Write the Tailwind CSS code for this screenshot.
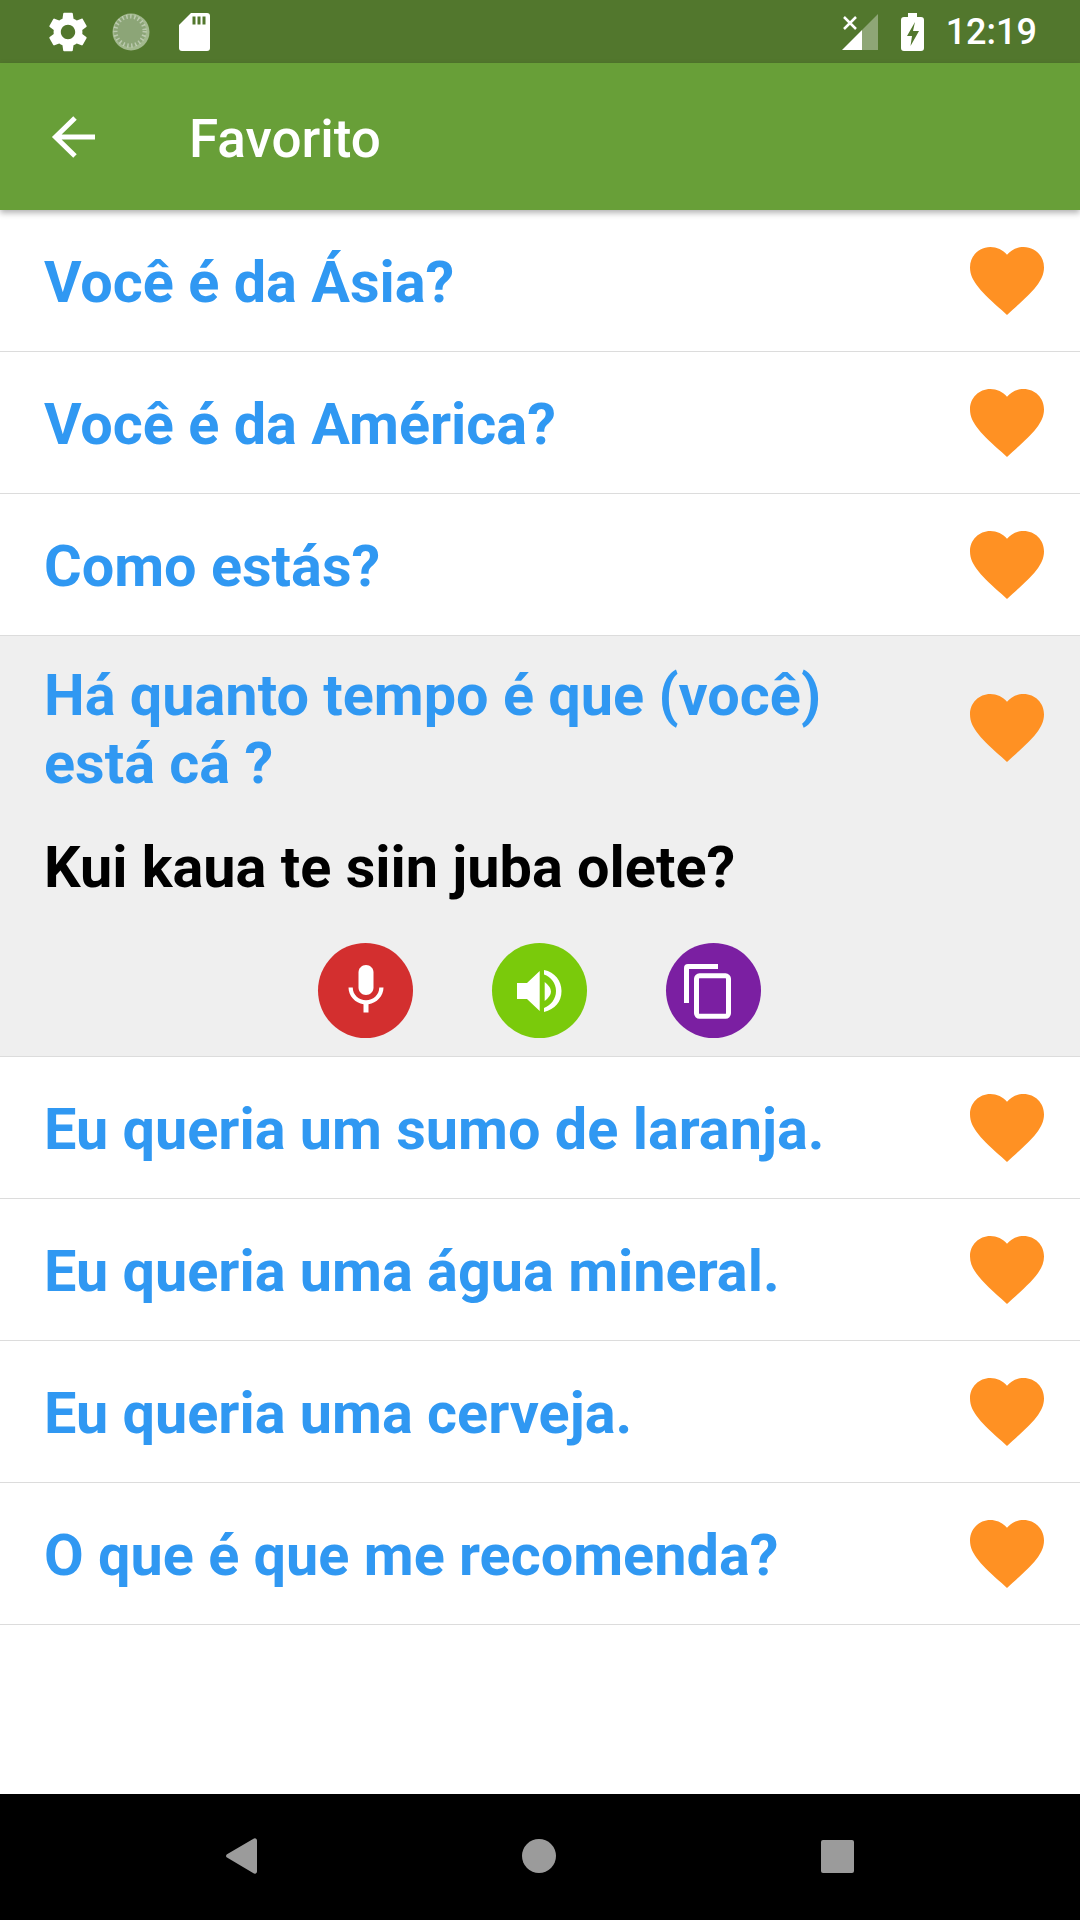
<!DOCTYPE html>
<html>
<head>
<meta charset="utf-8">
<script src="https://cdn.jsdelivr.net/npm/@tailwindcss/browser@4"></script>
</head>
<body class="m-0 bg-white font-['Roboto',sans-serif]">
<div class="w-[1080px] h-[1920px] flex flex-col overflow-hidden">
  <div class="h-[63px] bg-[#52772d] flex items-center justify-between pl-[44px] pr-[43px] shrink-0 text-white">
    <div class="flex items-center">
      <svg class="w-[48px] h-[48px]" viewBox="0 0 24 24" fill="#fff"><path d="M19.14 12.94c.04-.3.06-.61.06-.94 0-.32-.02-.64-.07-.94l2.03-1.58c.18-.14.23-.41.12-.61l-1.92-3.32c-.12-.22-.37-.29-.59-.22l-2.39.96c-.5-.38-1.03-.7-1.62-.94l-.36-2.54c-.04-.24-.24-.41-.48-.41h-3.84c-.24 0-.43.17-.47.41l-.36 2.54c-.59.24-1.13.57-1.62.94l-2.39-.96c-.22-.08-.47 0-.59.22L2.74 8.87c-.12.21-.08.47.12.61l2.03 1.58c-.05.3-.09.63-.09.94s.02.64.07.94l-2.03 1.58c-.18.14-.23.41-.12.61l1.92 3.32c.12.22.37.29.59.22l2.39-.96c.5.38 1.03.7 1.62.94l.36 2.54c.05.24.24.41.48.41h3.84c.24 0 .44-.17.47-.41l.36-2.54c.59-.24 1.13-.56 1.62-.94l2.39.96c.22.08.47 0 .59-.22l1.92-3.32c.12-.22.07-.47-.12-.61l-2.01-1.58zM12 15.6c-1.98 0-3.6-1.62-3.6-3.6s1.62-3.6 3.6-3.6 3.6 1.62 3.6 3.6-1.62 3.6-3.6 3.6z"/></svg>
      <svg class="w-[38px] h-[38px] ml-[20px]" viewBox="0 0 38 38"><circle cx="19" cy="19" r="18.500" fill="#a3b98f"/><circle cx="18" cy="18" r="16" fill="#8ca577"/><circle cx="18" cy="18" r="14.500" fill="none" stroke="#fff" stroke-opacity=".4" stroke-width="4" stroke-dasharray="1.500 2.500"/><path d="M35 8a18.500 18.500 0 0 1-26 27a17 17 0 0 0 26-27z" fill="#fff" fill-opacity=".9"/></svg>
      <svg class="w-[31px] h-[38px] ml-[29px]" viewBox="0 0 31 38" fill="#fff"><path d="M12 0h16a3 3 0 0 1 3 3v32a3 3 0 0 1-3 3H3a3 3 0 0 1-3-3V12z"/><path d="M13.500 3.500h3v8h-3zM18.500 3.500h3v8h-3zM23.500 3.500h3v8h-3z" fill="#52772d"/></svg>
    </div>
    <div class="flex items-center">
      <svg class="w-[36px] h-[37px] mr-[23px] mt-[1px]" viewBox="0 0 36 37"><path d="M36 0v36H20V16z" fill="#fff" fill-opacity=".35"/><path d="M20 16v20H0z" fill="#fff"/><path d="M2 3l12 12M14 3L2 15" stroke="#fff" stroke-width="2.500" fill="none"/></svg>
      <svg class="w-[23px] h-[38px] mr-[22px]" viewBox="0 0 23 38"><path d="M7 0h9v4h4a3 3 0 0 1 3 3v28a3 3 0 0 1-3 3H3a3 3 0 0 1-3-3V7a3 3 0 0 1 3-3h4z" fill="#fff"/><path d="M14 9L6 23h5l-1.500 10L18 18h-6z" fill="#52772d"/></svg>
      <span class="text-[36px] leading-none font-medium">12:19</span>
    </div>
  </div>
  <div class="relative z-10 h-[147px] bg-[#689f38] flex items-center shrink-0 shadow-[0_3px_6px_rgba(0,0,0,0.3)]">
    <svg class="w-[44px] h-[44px] ml-[51px]" viewBox="0 0 44 44" fill="none" stroke="#fff" stroke-width="5"><path d="M44 22H4M24 3L4.500 22 24 41"/></svg>
    <span class="ml-[94px] text-[53px] leading-none font-medium text-white mt-[6px]">Favorito</span>
  </div>
  <div class="flex-1 flex flex-col">
    <div class="h-[142px] flex items-center border-b border-[#dcdcdc] pl-[44px] pr-[36px]"><span class="flex-1 text-[57.600px] font-bold leading-[67.500px] text-[#3098f2] mt-[4px]">Você é da Ásia?</span><svg class="w-[74px] h-[68px] fill-[#ff9123]" viewBox="2 3 20 18.350"><path d="M12 21.350l-1.450-1.320C5.400 15.360 2 12.280 2 8.500 2 5.420 4.420 3 7.500 3c1.740 0 3.410.81 4.500 2.090C13.090 3.810 14.760 3 16.500 3 19.580 3 22 5.420 22 8.500c0 3.780-3.400 6.860-8.550 11.540L12 21.350z"/></svg></div>
    <div class="h-[142px] flex items-center border-b border-[#dcdcdc] pl-[44px] pr-[36px]"><span class="flex-1 text-[57.600px] font-bold leading-[67.500px] text-[#3098f2] mt-[4px]">Você é da América?</span><svg class="w-[74px] h-[68px] fill-[#ff9123]" viewBox="2 3 20 18.350"><path d="M12 21.350l-1.450-1.320C5.400 15.360 2 12.280 2 8.500 2 5.420 4.420 3 7.500 3c1.740 0 3.410.81 4.500 2.090C13.090 3.810 14.760 3 16.500 3 19.580 3 22 5.420 22 8.500c0 3.780-3.400 6.860-8.550 11.540L12 21.350z"/></svg></div>
    <div class="h-[142px] flex items-center border-b border-[#dcdcdc] pl-[44px] pr-[36px]"><span class="flex-1 text-[57.600px] font-bold leading-[67.500px] text-[#3098f2] mt-[4px]">Como estás?</span><svg class="w-[74px] h-[68px] fill-[#ff9123]" viewBox="2 3 20 18.350"><path d="M12 21.350l-1.450-1.320C5.400 15.360 2 12.280 2 8.500 2 5.420 4.420 3 7.500 3c1.740 0 3.410.81 4.500 2.090C13.090 3.810 14.760 3 16.500 3 19.580 3 22 5.420 22 8.500c0 3.780-3.400 6.860-8.550 11.540L12 21.350z"/></svg></div>
    <div class="h-[421px] bg-[#efefef] border-b border-[#dcdcdc] flex flex-col pl-[44px] pr-[36px]">
      <div class="flex items-center pt-[26px]"><span class="flex-1 text-[57.600px] font-bold leading-[67.500px] text-[#3098f2] pr-[100px]">Há quanto tempo é que (você) está cá ?</span><svg class="w-[74px] h-[68px] fill-[#ff9123] mb-[3px]" viewBox="2 3 20 18.350"><path d="M12 21.350l-1.450-1.320C5.400 15.360 2 12.280 2 8.500 2 5.420 4.420 3 7.500 3c1.740 0 3.410.81 4.500 2.090C13.090 3.810 14.760 3 16.500 3 19.580 3 22 5.420 22 8.500c0 3.780-3.400 6.860-8.550 11.540L12 21.350z"/></svg></div>
      <div class="mt-[37px] text-[57.600px] font-bold leading-[67.500px] text-black">Kui kaua te siin juba olete?</div>
      <div class="mt-[41px] flex justify-center gap-[79px] pr-[9px]">
        <div class="w-[95px] h-[95px] rounded-full bg-[#d32f2f] flex items-center justify-center">
          <svg class="w-[60px] h-[60px]" viewBox="0 0 24 24" fill="#fff"><path d="M12 14c1.700 0 3-1.300 3-3V5c0-1.700-1.300-3-3-3S9 3.300 9 5v6c0 1.700 1.300 3 3 3z"/><path d="M17.300 11c0 3-2.500 5.100-5.300 5.100S6.700 14 6.700 11H5c0 3.400 2.700 6.200 6 6.700V21h2v-3.300c3.300-.5 6-3.300 6-6.700z"/></svg>
        </div>
        <div class="w-[95px] h-[95px] rounded-full bg-[#7aca0b] flex items-center justify-center">
          <svg class="w-[45px] h-[42px] mt-[1px]" viewBox="0 0 45 42" fill="#fff"><path d="M0 13h10L22.700 1v40L10 29H0z"/><path d="M27.700 12Q34 17 34 21.500T27.700 31z"/><path d="M27 0C38 2 44.500 11 44.500 21 44.500 32 38 39 27 42V38C34 35 39 29 39 21 39 13 34 7 27 4.500z"/></svg>
        </div>
        <div class="w-[95px] h-[95px] rounded-full bg-[#7b1fa2] flex items-center justify-center">
          <svg class="w-[47px] h-[55px] ml-[-12px] mt-[2px]" viewBox="0 0 47 55" fill="none" stroke="#fff" stroke-width="5"><path d="M34 2.500H4a1.500 1.500 0 0 0-1.500 1.500V39"/><rect x="12.500" y="11.800" width="32" height="40.500" rx="3"/></svg>
        </div>
      </div>
    </div>
    <div class="h-[142px] flex items-center border-b border-[#dcdcdc] pl-[44px] pr-[36px]"><span class="flex-1 text-[57.600px] font-bold leading-[67.500px] text-[#3098f2] mt-[4px]">Eu queria um sumo de laranja.</span><svg class="w-[74px] h-[68px] fill-[#ff9123]" viewBox="2 3 20 18.350"><path d="M12 21.350l-1.450-1.320C5.400 15.360 2 12.280 2 8.500 2 5.420 4.420 3 7.500 3c1.740 0 3.410.81 4.500 2.090C13.090 3.810 14.760 3 16.500 3 19.580 3 22 5.420 22 8.500c0 3.780-3.400 6.860-8.550 11.540L12 21.350z"/></svg></div>
    <div class="h-[142px] flex items-center border-b border-[#dcdcdc] pl-[44px] pr-[36px]"><span class="flex-1 text-[57.600px] font-bold leading-[67.500px] text-[#3098f2] mt-[4px]">Eu queria uma água mineral.</span><svg class="w-[74px] h-[68px] fill-[#ff9123]" viewBox="2 3 20 18.350"><path d="M12 21.350l-1.450-1.320C5.400 15.360 2 12.280 2 8.500 2 5.420 4.420 3 7.500 3c1.740 0 3.410.81 4.500 2.090C13.090 3.810 14.760 3 16.500 3 19.580 3 22 5.420 22 8.500c0 3.780-3.400 6.860-8.550 11.540L12 21.350z"/></svg></div>
    <div class="h-[142px] flex items-center border-b border-[#dcdcdc] pl-[44px] pr-[36px]"><span class="flex-1 text-[57.600px] font-bold leading-[67.500px] text-[#3098f2] mt-[4px]">Eu queria uma cerveja.</span><svg class="w-[74px] h-[68px] fill-[#ff9123]" viewBox="2 3 20 18.350"><path d="M12 21.350l-1.450-1.320C5.400 15.360 2 12.280 2 8.500 2 5.420 4.420 3 7.500 3c1.740 0 3.410.81 4.500 2.090C13.090 3.810 14.760 3 16.500 3 19.580 3 22 5.420 22 8.500c0 3.780-3.400 6.860-8.550 11.540L12 21.350z"/></svg></div>
    <div class="h-[142px] flex items-center border-b border-[#dcdcdc] pl-[44px] pr-[36px]"><span class="flex-1 text-[57.600px] font-bold leading-[67.500px] text-[#3098f2] mt-[4px]">O que é que me recomenda?</span><svg class="w-[74px] h-[68px] fill-[#ff9123]" viewBox="2 3 20 18.350"><path d="M12 21.350l-1.450-1.320C5.400 15.360 2 12.280 2 8.500 2 5.420 4.420 3 7.500 3c1.740 0 3.410.81 4.500 2.090C13.090 3.810 14.760 3 16.500 3 19.580 3 22 5.420 22 8.500c0 3.780-3.400 6.860-8.550 11.540L12 21.350z"/></svg></div>
  </div>
  <div class="h-[126px] bg-black shrink-0 flex items-center justify-between pl-[226px] pr-[226px] pb-[2px]">
    <svg class="w-[31px] h-[36px]" viewBox="0 0 31 36" fill="#9b9b9b"><path d="M27.500.8L1 16.200a2 2 0 0 0 0 3.400l26.500 15.600a2.200 2.200 0 0 0 3.500-1.700V2.500A2.200 2.200 0 0 0 27.500.8z"/></svg>
    <div class="w-[34px] h-[34px] rounded-full bg-[#9b9b9b]"></div>
    <div class="w-[33px] h-[33px] rounded-[2px] bg-[#9b9b9b]"></div>
  </div>
</div>
</body>
</html>
